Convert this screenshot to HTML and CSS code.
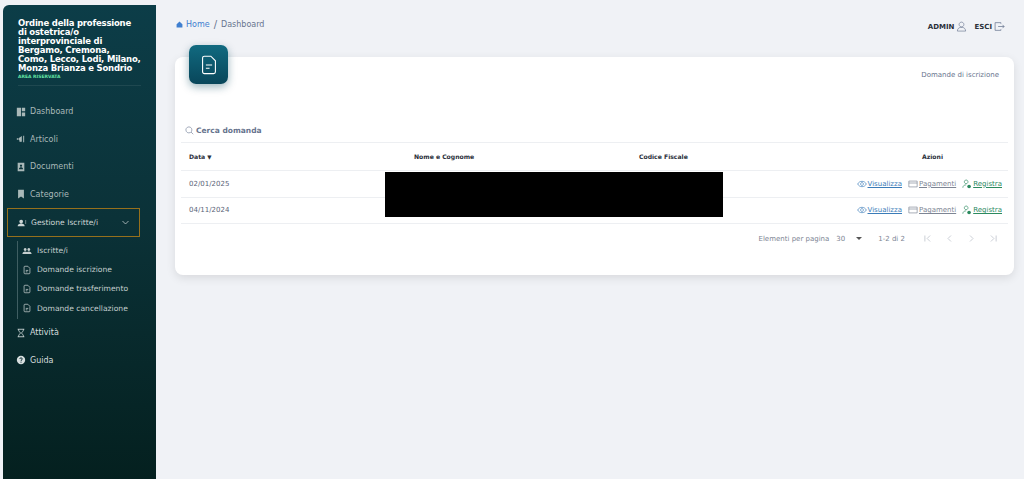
FILE: index.html
```html
<!DOCTYPE html>
<html lang="it">
<head>
    <meta charset="UTF-8">
    <meta name="viewport" content="width=device-width, initial-scale=1.0">
    <title>Domande di iscrizione</title>
    <link rel="stylesheet" href="styles.css">
</head>
<body>
    <aside class="sidebar">
        <div class="brand">
            <div class="brand-title">Ordine della professione di ostetrica/o interprovinciale di Bergamo, Cremona, Como, Lecco, Lodi, Milano, Monza Brianza e Sondrio</div>
            <div class="brand-sub">AREA RISERVATA</div>
        </div>
        <nav class="nav">
            <a class="nav-item">
                <svg class="nav-icon" viewBox="0 0 12 12"><path fill="currentColor" d="M1 1h5v10H1zM7 1h4v4H7zM7 6.500h4V11H7z"/></svg>
                Dashboard
            </a>
            <a class="nav-item">
                <svg class="nav-icon" viewBox="0 0 12 12"><path fill="currentColor" d="M3 5l4-2.500v7L3 7zM1 5h1.400v2H1zM8.600 2h1.200v8H8.600zM4 7.500h1.400l.4 2H4.400z"/></svg>
                Articoli
            </a>
            <a class="nav-item">
                <svg class="nav-icon" viewBox="0 0 12 12"><path fill="currentColor" fill-rule="evenodd" d="M2 1h8v10H2zM6 3a1.300 1.300 0 1 0 .01 0zM3.500 8.600h5C8.300 7 7.300 6.300 6 6.300S3.700 7 3.500 8.600z"/></svg>
                Documenti
            </a>
            <a class="nav-item">
                <svg class="nav-icon" viewBox="0 0 12 12"><path fill="currentColor" d="M2.500 1h7v10.500L6 9l-3.500 2.500z"/></svg>
                Categorie
            </a>
            <a class="nav-item nav-item-open">
                <svg class="nav-icon" viewBox="0 0 12 12"><path fill="currentColor" d="M5 2a2.200 2.200 0 1 1-.01 0zM.8 10c0-2.300 1.800-3.400 4.200-3.400S9.200 7.700 9.200 10zM9.800 3h1.200v1.200H9.800zM9.800 5.300h1.200v1.200H9.800z"/></svg>
                Gestione Iscritte/i
                <svg class="chevron" viewBox="0 0 12 12"><path fill="none" stroke="currentColor" d="M2 4l4 4 4-4"/></svg>
            </a>
            <div class="subnav">
                <a class="sub-item">
                    <svg class="nav-icon" viewBox="0 0 12 12"><path fill="currentColor" d="M3.800 2.500a1.700 1.700 0 1 1-.01 0zM8.200 2.500a1.700 1.700 0 1 1-.01 0zM.5 9.500c0-2 1.300-3 3.300-3 .8 0 1.500.2 2.200.6.700-.4 1.400-.6 2.200-.6 2 0 3.300 1 3.300 3z"/></svg>
                    Iscritte/i
                </a>
                <a class="sub-item">
                    <svg class="nav-icon" viewBox="0 0 12 12"><path fill="none" stroke="currentColor" stroke-width=".9" d="M2.500 2.500a1 1 0 0 1 1-1H7l2.500 2.500v5.500a1 1 0 0 1-1 1h-5a1 1 0 0 1-1-1zM4.500 6.500h3M4.500 8.200h2"/></svg>
                    Domande iscrizione
                </a>
                <a class="sub-item">
                    <svg class="nav-icon" viewBox="0 0 12 12"><path fill="none" stroke="currentColor" stroke-width=".9" d="M2.500 2.500a1 1 0 0 1 1-1H7l2.500 2.500v5.500a1 1 0 0 1-1 1h-5a1 1 0 0 1-1-1zM4.500 6.500h3M4.500 8.200h2"/></svg>
                    Domande trasferimento
                </a>
                <a class="sub-item">
                    <svg class="nav-icon" viewBox="0 0 12 12"><path fill="none" stroke="currentColor" stroke-width=".9" d="M2.500 2.500a1 1 0 0 1 1-1H7l2.500 2.500v5.500a1 1 0 0 1-1 1h-5a1 1 0 0 1-1-1zM4.500 6.500h3M4.500 8.200h2"/></svg>
                    Domande cancellazione
                </a>
            </div>
            <a class="nav-item nav-item-light">
                <svg class="nav-icon" viewBox="0 0 12 12"><path fill="none" stroke="currentColor" d="M2 1.500h8M2 10.500h8M3 1.500c0 3 2.200 3.200 2.200 4.500S3 7.500 3 10.500M9 1.500c0 3-2.200 3.200-2.200 4.500S9 7.500 9 10.500"/></svg>
                Attività
            </a>
            <a class="nav-item nav-item-light">
                <svg class="nav-icon" viewBox="0 0 12 12"><circle cx="6" cy="6" r="5" fill="currentColor"/><path fill="none" stroke="#0a2d33" stroke-width="1.200" d="M4.500 4.700C4.600 3.800 5.200 3.400 6 3.400c.9 0 1.500.6 1.500 1.300 0 1.200-1.500 1.200-1.500 2.400M6 8v1.200"/></svg>
                Guida
            </a>
        </nav>
    </aside>

    <div class="main">
        <header class="topbar">
            <div class="breadcrumb">
                <svg class="home-icon" viewBox="0 0 12 12"><path fill="currentColor" d="M6 1l5 4.500V11H1V5.500z"/></svg>
                <a class="crumb-link">Home</a>
                <span class="crumb-sep">/</span>
                <span>Dashboard</span>
            </div>
            <div class="user-actions">
                <span class="user-action">ADMIN
                    <svg class="user-icon" viewBox="0 0 12 12"><path fill="none" stroke="currentColor" stroke-width=".7" d="M6 1.200a2.600 2.600 0 1 1-.01 0zM1.500 11c0-2.300 1.500-3.600 3-4h3c1.500.4 3 1.700 3 4z"/></svg>
                </span>
                <span class="user-action">ESCI
                    <svg class="user-icon" viewBox="0 0 12 12"><path fill="none" stroke="currentColor" stroke-width=".8" d="M7.500 3V1.800H1.200v8.400h6.300V9M4.500 6h6.500M9.300 4.200L11 6 9.300 7.800"/></svg>
                </span>
            </div>
        </header>

        <section class="card">
            <div class="card-tile">
                <svg viewBox="0 0 12 12"><path fill="none" stroke="currentColor" stroke-width=".6" d="M2.500 2.200a1 1 0 0 1 1-1H7l2.500 2.500v6a1 1 0 0 1-1 1h-5a1 1 0 0 1-1-1zM4.300 6h3.400M4.300 7.800h2"/></svg>
            </div>
            <div class="card-title">Domande di iscrizione</div>
            <div class="search">
                <svg class="search-icon" viewBox="0 0 12 12"><path fill="none" stroke="currentColor" stroke-width=".8" d="M5.200 1.200a4 4 0 1 1-.01 0zM8 8l3 3"/></svg>
                Cerca domanda
            </div>

            <div class="table-row table-head">
                <div class="col-date">Data <span class="sort">▼</span></div>
                <div class="col-name">Nome e Cognome</div>
                <div class="col-code">Codice Fiscale</div>
                <div class="col-actions">Azioni</div>
            </div>
            <div class="table-row">
                <div class="col-date">02/01/2025</div>
                <div class="col-name"></div>
                <div class="col-code"></div>
                <div class="col-actions">
                    <a class="act act-view"><svg viewBox="0 0 12 12"><path fill="none" stroke="currentColor" stroke-width=".8" d="M.8 6C2 3.800 3.800 2.800 6 2.800S10 3.800 11.200 6C10 8.200 8.200 9.200 6 9.200S2 8.200.8 6zM6 4.300a1.700 1.700 0 1 1-.01 0z"/></svg><u>Visualizza</u></a>
                    <a class="act act-pay"><svg viewBox="0 0 12 12"><path fill="none" stroke="currentColor" stroke-width=".8" d="M1 2.500h10v7H1zM1 4.800h10"/></svg><u>Pagamenti</u></a>
                    <a class="act act-reg"><svg viewBox="0 0 12 12"><path fill="none" stroke="currentColor" stroke-width=".8" d="M5 1.200a2.200 2.200 0 1 1-.01 0zM1 10.500c0-2 1.500-3.500 4-3.500"/><circle cx="8.500" cy="9" r="2.200" fill="currentColor"/></svg><u>Registra</u></a>
                </div>
            </div>
            <div class="table-row">
                <div class="col-date">04/11/2024</div>
                <div class="col-name"></div>
                <div class="col-code"></div>
                <div class="col-actions">
                    <a class="act act-view"><svg viewBox="0 0 12 12"><path fill="none" stroke="currentColor" stroke-width=".8" d="M.8 6C2 3.800 3.800 2.800 6 2.800S10 3.800 11.200 6C10 8.200 8.200 9.200 6 9.200S2 8.200.8 6zM6 4.300a1.700 1.700 0 1 1-.01 0z"/></svg><u>Visualizza</u></a>
                    <a class="act act-pay"><svg viewBox="0 0 12 12"><path fill="none" stroke="currentColor" stroke-width=".8" d="M1 2.500h10v7H1zM1 4.800h10"/></svg><u>Pagamenti</u></a>
                    <a class="act act-reg"><svg viewBox="0 0 12 12"><path fill="none" stroke="currentColor" stroke-width=".8" d="M5 1.200a2.200 2.200 0 1 1-.01 0zM1 10.500c0-2 1.500-3.500 4-3.500"/><circle cx="8.500" cy="9" r="2.200" fill="currentColor"/></svg><u>Registra</u></a>
                </div>
            </div>
            <div class="redacted"></div>

            <div class="pager">
                <span>Elementi per pagina</span>
                <span class="pager-size">30</span>
                <span class="pager-caret"></span>
                <span class="pager-range">1-2 di 2</span>
                <div class="pager-btns">
                    <svg viewBox="0 0 12 12"><path fill="none" stroke="currentColor" d="M2.500 2v8M9.500 2L5.500 6l4 4"/></svg>
                    <svg viewBox="0 0 12 12"><path fill="none" stroke="currentColor" d="M8 2L4 6l4 4"/></svg>
                    <svg viewBox="0 0 12 12"><path fill="none" stroke="currentColor" d="M4 2l4 4-4 4"/></svg>
                    <svg viewBox="0 0 12 12"><path fill="none" stroke="currentColor" d="M9.500 2v8M2.500 2l4 4-4 4"/></svg>
                </div>
            </div>
        </section>
    </div>
</body>
</html>
```

FILE: styles.css
```css
* {
    margin: 0;
    padding: 0;
    box-sizing: border-box;
    font-family: 'DejaVu Sans', 'Liberation Sans', sans-serif;
}

html, body {
    height: 100%;
    overflow: hidden;
}

body {
    display: flex;
    background: #f0f2f6;
    color: #344767;
}

/* sidebar */
.sidebar {
    width: 153px;
    margin: 5px 0 0 3px;
    flex-shrink: 0;
    border-radius: 6px 0 0 0;
    background: linear-gradient(180deg, #0c3d48 0%, #0b3238 45%, #04201f 100%);
    color: #a9b8b8;
}

.brand {
    height: 81px;
    margin: 0 15px;
    padding-top: 14px;
    border-bottom: 1px solid rgba(255, 255, 255, 0.08);
}

.brand-title {
    font-size: 8.500px;
    line-height: 8.900px;
    font-weight: 700;
    color: #fff;
    letter-spacing: -0.2px;
}

.brand-sub {
    font-size: 4.500px;
    line-height: 8px;
    margin-top: 1px;
    font-weight: 700;
    color: #63e3a5;
}

.nav {
    display: flex;
    flex-direction: column;
    margin-top: 12px;
}

.nav-item {
    display: flex;
    align-items: center;
    gap: 4px;
    height: 27.500px;
    padding-left: 13px;
    font-size: 8px;
}

.nav-icon {
    width: 10px;
    height: 10px;
    flex-shrink: 0;
}

.nav-item-open {
    width: 133px;
    height: 29px;
    margin-left: 4px;
    padding-left: 9px;
    font-size: 7.600px;
    border: 1px solid #96701c;
    color: #cdd6d6;
}

.nav-item-light {
    color: #d6dede;
}

.chevron {
    width: 9px;
    height: 9px;
    margin-left: auto;
    margin-right: 9px;
}

.subnav {
    display: flex;
    flex-direction: column;
    height: 78px;
    margin: 4px 0 0 14px;
    padding-left: 4px;
    border-left: 1px solid #3f5e62;
}

.sub-item {
    display: flex;
    align-items: center;
    gap: 5px;
    height: 19.200px;
    font-size: 7.600px;
    color: #c4cece;
}

/* contenuto */
.main {
    flex: 1;
    padding: 0 10px 0 19px;
}

.topbar {
    display: flex;
    justify-content: space-between;
    align-items: center;
    height: 50px;
    padding-right: 9px;
}

.breadcrumb {
    display: flex;
    align-items: center;
    gap: 3px;
    margin-bottom: 1px;
    font-size: 8px;
    color: #67748e;
}

.home-icon {
    width: 7px;
    height: 7px;
    margin-left: 1px;
    color: #3f7fd0;
}

.crumb-link {
    color: #3f7fd0;
}

.crumb-sep {
    margin: 0 1px;
    font-size: 10px;
}

.user-actions {
    display: flex;
    gap: 7px;
    margin-top: 3px;
    font-size: 7px;
    font-weight: 700;
    color: #2a2f3a;
}

.user-action {
    display: flex;
    align-items: center;
    gap: 2px;
}

.user-icon {
    width: 11px;
    height: 11px;
    color: #67748e;
}

.card {
    position: relative;
    height: 218px;
    margin-top: 7px;
    padding: 0 6px;
    background: #fff;
    border-radius: 8px;
    box-shadow: 0 3px 10px rgba(0, 0, 0, 0.1);
}

.card-tile {
    position: absolute;
    top: -12px;
    left: 14px;
    width: 39px;
    height: 39px;
    display: flex;
    align-items: center;
    justify-content: center;
    border-radius: 7px;
    background: linear-gradient(180deg, #116a80 0%, #08465a 100%);
    box-shadow: 0 3px 8px rgba(8, 70, 90, 0.4);
    color: #fff;
}

.card-tile svg {
    width: 22px;
    height: 22px;
}

.card-title {
    height: 64px;
    padding: 14px 9px 0 0;
    font-size: 7px;
    text-align: right;
    color: #67748e;
}

.search {
    display: flex;
    align-items: center;
    gap: 2px;
    height: 21px;
    padding: 0 0 2px 4px;
    font-size: 7.500px;
    font-weight: 700;
    color: #67748e;
}

.search-icon {
    width: 9px;
    height: 9px;
}

.table-row {
    display: flex;
    align-items: center;
    height: 26.500px;
    border-bottom: 1px solid #edeff2;
    font-size: 7px;
    color: #5a6478;
}

.table-head {
    height: 29px;
    border-top: 1px solid #edeff2;
    font-size: 6.100px;
    font-weight: 700;
    color: #2a2f3a;
}

.col-date {
    width: 233px;
    padding-left: 8px;
}

.sort {
    font-size: 5.500px;
}

.col-name {
    width: 225px;
}

.col-code {
    width: 200px;
}

.col-actions {
    flex: 1;
    display: flex;
    justify-content: flex-end;
    gap: 6px;
    padding-right: 6px;
}

.table-head .col-actions {
    justify-content: flex-start;
    padding-left: 83px;
}

.act {
    display: flex;
    align-items: center;
    gap: 1px;
    font-size: 7px;
}

.act svg {
    width: 10px;
    height: 10px;
    flex-shrink: 0;
}

.act-view {
    color: #3b7cb8;
}

.act-pay {
    color: #7d8594;
}

.act-reg {
    color: #2c8a5f;
}

.redacted {
    position: absolute;
    left: 210px;
    top: 115px;
    width: 338px;
    height: 45px;
    background: #000;
}

.pager {
    display: flex;
    align-items: center;
    justify-content: flex-end;
    height: 29px;
    padding-right: 10px;
    font-size: 7px;
    color: #7d8594;
}

.pager-size {
    margin-left: 7px;
}

.pager-caret {
    width: 0;
    height: 0;
    margin-left: 11px;
    border-left: 3px solid transparent;
    border-right: 3px solid transparent;
    border-top: 3px solid #555;
}

.pager-range {
    margin-left: 16px;
}

.pager-btns {
    display: flex;
    gap: 13px;
    margin-left: 18px;
    color: #b9bfc8;
}

.pager-btns svg {
    width: 9px;
    height: 9px;
}
```
